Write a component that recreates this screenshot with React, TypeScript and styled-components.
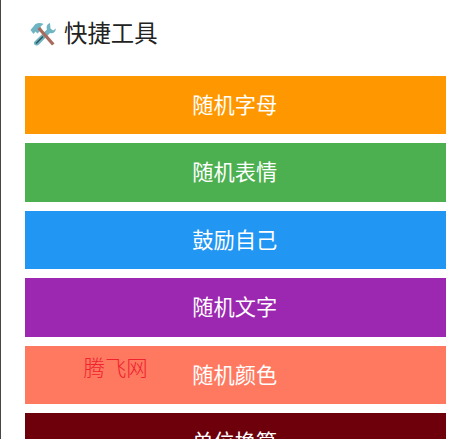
import styled, { createGlobalStyle } from "styled-components";

const GlobalStyle = createGlobalStyle`
  html, body {
    margin: 0;
    padding: 0;
    height: 439px;
    overflow: hidden;
    background: #fff;
    font-family: "Noto Sans CJK SC", "Liberation Sans", sans-serif;
  }
`;

const Page = styled.div`
  position: relative;
  box-sizing: border-box;
  width: 462px;
  height: 439px;
  overflow: hidden;
  border-left: 1.5px solid #4a4444;
  padding: 0 16px 0 23.5px;
`;

const Header = styled.div`
  display: flex;
  align-items: center;
  gap: 8.5px;
  height: 75.6px;
  padding: 0 0 7.6px 5px;
  box-sizing: border-box;
`;

const Title = styled.h2`
  margin: -5px 0 0;
  font-size: 23.4px;
  font-weight: 400;
  color: #222;
  line-height: 32px;
`;

const ButtonList = styled.div`
  display: flex;
  flex-direction: column;
  gap: 9px;
`;

const ToolButton = styled.button<{ $bg: string }>`
  display: block;
  width: 100%;
  height: 58.5px;
  flex: none;
  border: 0;
  padding: 0 1px 2px 0;
  background: ${({ $bg }) => $bg};
  color: #fff;
  font-family: inherit;
  font-size: 21.2px;
  line-height: 56.5px;
  text-align: center;
`;

const Watermark = styled.div`
  position: absolute;
  left: 82.5px;
  top: 351.5px;
  font-size: 21.4px;
  line-height: 30px;
  font-weight: 300;
  color: #f0222e;
`;

const ToolsIcon = () => (
  <svg width="26" height="24" viewBox="0 0 26 24" aria-hidden="true">
    <path d="M0.5 8 L5.5 2 C8 0.8 11 0.8 13.5 2 L10.5 4.5 L11.5 7.5 L7.5 11.5 L5.5 9.5 L3.5 12 Z" fill="#6fb4c2" />
    <path d="M20 1 C17 2 16 5 17 7.5 L5 19 C3.5 20.5 3.5 22 5 23 C6.5 24 8 23.5 9 22.5 L20 11 C23 12 25.5 10 26 6.5 L23 8.5 L20.5 6.5 Z" fill="#6fb4c2" />
    <path d="M6 21.5 L13 14.5" stroke="#2f5560" strokeWidth="1.6" />
    <path d="M7.5 7 L10 5 L24.5 21.5 L22 23.5 Z" fill="#a9695c" />
  </svg>
);

const tools = [
  { label: "随机字母", color: "#ff9800" },
  { label: "随机表情", color: "#4caf50" },
  { label: "鼓励自己", color: "#2196f3" },
  { label: "随机文字", color: "#9c27b0" },
  { label: "随机颜色", color: "#ff7961" },
  { label: "单位换算", color: "#6d000b" },
];

export default function App() {
  return (
    <>
      <GlobalStyle />
      <Page>
        <Header>
          <ToolsIcon />
          <Title>快捷工具</Title>
        </Header>
        <ButtonList>
          {tools.map((tool) => (
            <ToolButton key={tool.label} $bg={tool.color}>
              {tool.label}
            </ToolButton>
          ))}
        </ButtonList>
        <Watermark>腾飞网</Watermark>
      </Page>
    </>
  );
}
